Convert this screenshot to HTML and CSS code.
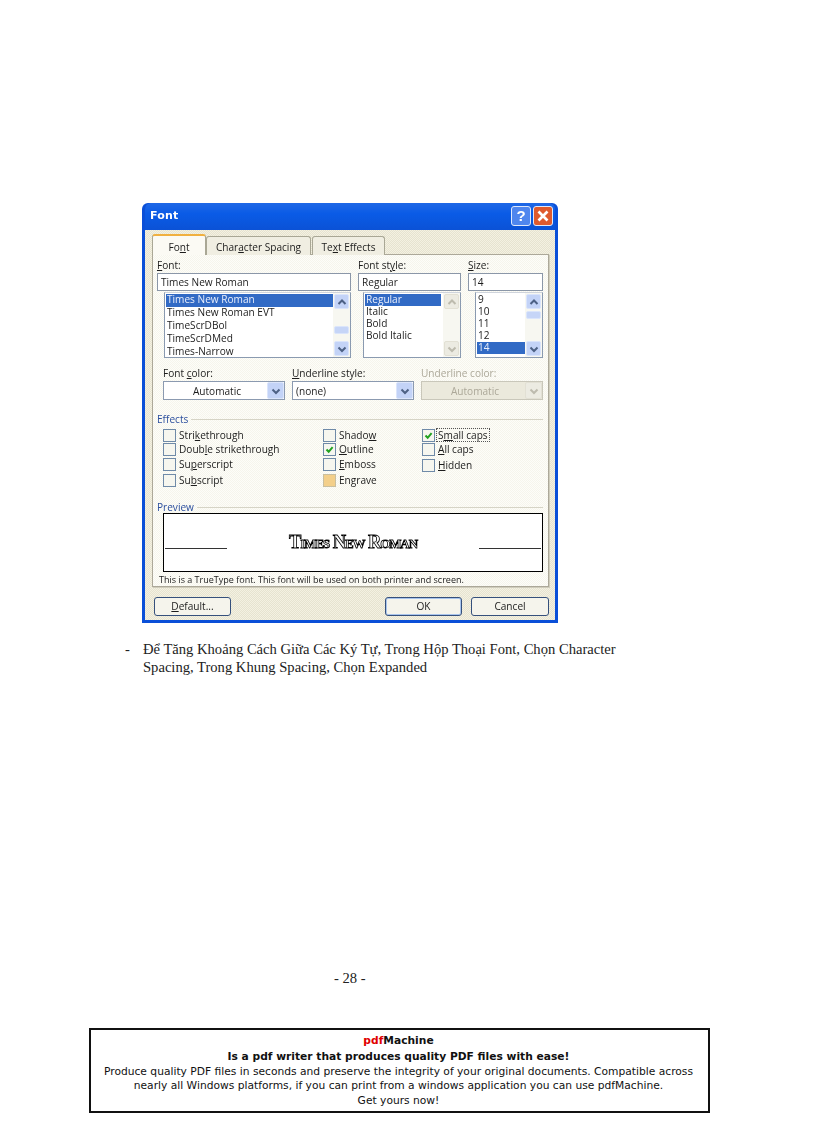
FILE: index.html
```html
<!DOCTYPE html>
<html lang="vi">
<head>
<meta charset="utf-8">
<title>Font</title>
<link rel="stylesheet" href="styles.css">
</head>
<body>
<main class="page">
  <section class="dialog">
    <header class="titlebar">
      <span class="title">Font</span>
      <span class="winbtn help">?</span>
      <span class="winbtn close"><svg viewBox="0 0 20 20" width="20" height="20"><path d="M5 5L15 15M15 5L5 15" stroke="#fff" stroke-width="3" fill="none"/></svg></span>
    </header>
    <div class="client">
      <nav class="tabs">
        <span class="tab active">Fo<u>n</u>t</span>
        <span class="tab t2">Char<u>a</u>cter Spacing</span>
        <span class="tab t3">Te<u>x</u>t Effects</span>
      </nav>
      <div class="panel">
        <div class="fontgrid">
          <div class="col">
            <label class="lbl"><u>F</u>ont:</label>
            <div class="input">Times New Roman</div>
            <div class="list l1">
              <div class="rows r13">
                <div class="sel">Times New Roman</div>
                <div>Times New Roman EVT</div>
                <div>TimeScrDBol</div>
                <div>TimeScrDMed</div>
                <div>Times-Narrow</div>
              </div>
              <div class="sbar">
                <span class="sb"><svg viewBox="0 0 12 12" width="12" height="12"><path d="M2.5 8L6 4.5L9.5 8" class="chev"/></svg></span>
                <span class="thumb th1"></span>
                <span class="sb"><svg viewBox="0 0 12 12" width="12" height="12"><path d="M2.5 4.5L6 8L9.5 4.5" class="chev"/></svg></span>
              </div>
            </div>
          </div>
          <div class="col">
            <label class="lbl">Font st<u>y</u>le:</label>
            <div class="input">Regular</div>
            <div class="list l2">
              <div class="rows r12">
                <div class="sel">Regular</div>
                <div>Italic</div>
                <div>Bold</div>
                <div>Bold Italic</div>
              </div>
              <div class="sbar off">
                <span class="sb"><svg viewBox="0 0 12 12" width="12" height="12"><path d="M2.5 8L6 4.5L9.5 8" class="chev"/></svg></span>
                <span class="sb"><svg viewBox="0 0 12 12" width="12" height="12"><path d="M2.5 4.5L6 8L9.5 4.5" class="chev"/></svg></span>
              </div>
            </div>
          </div>
          <div class="col">
            <label class="lbl"><u>S</u>ize:</label>
            <div class="input">14</div>
            <div class="list l3">
              <div class="rows r12">
                <div>9</div>
                <div>10</div>
                <div>11</div>
                <div>12</div>
                <div class="sel">14</div>
              </div>
              <div class="sbar">
                <span class="sb"><svg viewBox="0 0 12 12" width="12" height="12"><path d="M2.5 8L6 4.5L9.5 8" class="chev"/></svg></span>
                <span class="thumb th3"></span>
                <span class="sb"><svg viewBox="0 0 12 12" width="12" height="12"><path d="M2.5 4.5L6 8L9.5 4.5" class="chev"/></svg></span>
              </div>
            </div>
          </div>
        </div>
        <div class="selects">
          <div class="selcol">
            <label class="lbl">Font <u>c</u>olor:</label>
            <div class="select center"><span class="val">Automatic</span><span class="drop"><svg viewBox="0 0 12 12" width="12" height="12"><path d="M2.5 4.5L6 8L9.5 4.5" class="chev"/></svg></span></div>
          </div>
          <div class="selcol">
            <label class="lbl"><u>U</u>nderline style:</label>
            <div class="select"><span class="val">(none)</span><span class="drop"><svg viewBox="0 0 12 12" width="12" height="12"><path d="M2.5 4.5L6 8L9.5 4.5" class="chev"/></svg></span></div>
          </div>
          <div class="selcol disabled">
            <label class="lbl">Underline color:</label>
            <div class="select center"><span class="val">Automatic</span><span class="drop"><svg viewBox="0 0 12 12" width="12" height="12"><path d="M2.5 4.5L6 8L9.5 4.5" class="chev"/></svg></span></div>
          </div>
        </div>
        <div class="grouphead effects-head"><span class="blue">Effects</span><i></i></div>
        <div class="effects">
          <div class="fxcol c1">
            <div class="chk r1"><span class="box"></span><span>Stri<u>k</u>ethrough</span></div>
            <div class="chk r2"><span class="box"></span><span>Doub<u>l</u>e strikethrough</span></div>
            <div class="chk r3"><span class="box"></span><span>Su<u>p</u>erscript</span></div>
            <div class="chk r4"><span class="box"></span><span>Su<u>b</u>script</span></div>
          </div>
          <div class="fxcol c2">
            <div class="chk r1"><span class="box"></span><span>Shado<u>w</u></span></div>
            <div class="chk r2"><span class="box"><svg viewBox="0 0 11 11" width="11" height="11"><path d="M2.5 5.5L4.7 7.8L8.6 3.2" class="tick"/></svg></span><span><u>O</u>utline</span></div>
            <div class="chk r3"><span class="box"></span><span><u>E</u>mboss</span></div>
            <div class="chk r4"><span class="box warm"></span><span>En<u>g</u>rave</span></div>
          </div>
          <div class="fxcol c3">
            <div class="chk r1"><span class="box"><svg viewBox="0 0 11 11" width="11" height="11"><path d="M2.5 5.5L4.7 7.8L8.6 3.2" class="tick"/></svg></span><span class="focus">S<u>m</u>all caps</span></div>
            <div class="chk r2"><span class="box"></span><span><u>A</u>ll caps</span></div>
            <div class="chk r5"><span class="box"></span><span><u>H</u>idden</span></div>
          </div>
        </div>
        <div class="grouphead preview-head"><span class="blue">Preview</span><i></i></div>
        <div class="preview">
          <i class="rule"></i>
          <span class="sample">Times New Roman</span>
          <i class="rule"></i>
        </div>
        <p class="note">This is a TrueType font. This font will be used on both printer and screen.</p>
      </div>
      <footer class="buttons">
        <span class="btn w77"><u>D</u>efault...</span>
        <span class="spacer"></span>
        <span class="btn w77 primary">OK</span>
        <span class="btn w78">Cancel</span>
      </footer>
    </div>
  </section>

  <div class="para">
    <span class="dash">-</span>
    <p>Để Tăng Khoảng Cách Giữa Các Ký Tự, Trong Hộp Thoại Font, Chọn Character Spacing, Trong Khung Spacing, Chọn Expanded</p>
  </div>

  <div class="pageno">- 28 -</div>

  <aside class="ad">
    <div class="l-brand"><b><span class="red">pdf</span>Machine</b></div>
    <div class="l-head"><b>Is a pdf writer that produces quality PDF files with ease!</b></div>
    <div class="l-a">Produce quality PDF files in seconds and preserve the integrity of your original documents. Compatible across</div>
    <div class="l-b">nearly all Windows platforms, if you can print from a windows application you can use pdfMachine.</div>
    <div class="l-c">Get yours now!</div>
  </aside>
</main>
</body>
</html>
```

FILE: styles.css
```css
* { box-sizing: border-box; }
html, body { margin: 0; padding: 0; background: #fff; }
.page { width: 816px; height: 1123px; padding-top: 203px; overflow: hidden; }

.dialog {
  width: 416px; height: 420px; margin-left: 142px;
  background: #0a4fd8; border-radius: 6px 6px 0 0;
  padding: 0 3px 3px;
  font: 10.1px/12px "Open Sans", "Noto Sans", sans-serif;
  color: #1c1c1c;
  filter: blur(0.5px);
  display: flex; flex-direction: column;
}
.dialog u { text-decoration-thickness: 1px; text-underline-offset: 1px; }
.titlebar {
  height: 27px; flex: none; display: flex; align-items: center; gap: 2px; padding: 0 2px 2px 5px;
  background: linear-gradient(#1f68e6, #0a5be6 40%, #0b52d6);
  border-radius: 6px 6px 0 0;
}
.title { flex: 1; color: #fff; font: bold 11px/14px "DejaVu Sans", sans-serif; letter-spacing: .2px; }
.winbtn { width: 20px; height: 20px; border: 1px solid #dfe8fb; border-radius: 3px; display: flex; align-items: center; justify-content: center; }
.help { background: #4f86ee; color: #fff; font: bold 15px/18px "Liberation Sans", sans-serif; }
.close { background: #df5a2e; }

.client {
  flex: 1; min-height: 0; padding: 4px 6px 0 7px;
  background-color: #ece9d8;
  background-image: conic-gradient(#f4f1e2 25%, #e6e3d0 0 50%, #f4f1e2 0 75%, #e6e3d0 0);
  background-size: 2px 2px;
}
.tabs { display: flex; height: 21px; margin-bottom: -1px; align-items: flex-end; position: relative; }
.tab { height: 19px; border: 1px solid #a9a795; border-bottom: 0; border-radius: 3px 3px 0 0; background: #f0eee2; line-height: 16px; text-align: center; padding-top: 2px; }
.tab.active { width: 54px; height: 21px; background: #fbfaf4; border-top: 2px solid #f0b040; border-bottom: 0; position: relative; z-index: 1; padding-top: 3px; }
.t2 { width: 105px; }
.t3 { width: 73px; margin-left: 1px; }

.panel {
  width: 397px; height: 333px;
  border: 1px solid #aca899;
  padding: 4px 5px 0 4px;
  background-color: #fafaf4;
  background-image: conic-gradient(#fdfdf9 25%, #f6f5ec 0 50%, #fdfdf9 0 75%, #f6f5ec 0);
  background-size: 2px 2px;
  box-shadow: 1px 1px 0 #d0cdbc;
}
.fontgrid { display: grid; grid-template-columns: 194px 103px 75px; column-gap: 7px; }
.lbl { display: block; height: 14px; line-height: 12px; }
.input { height: 18px; border: 1px solid #8b97a8; background: #fff; line-height: 16px; padding-left: 3px; }
.list { height: 66px; margin-top: 1px; border: 1px solid #8a9ab0; border-top-color: #cfd4dc; background: #fff; display: flex; }
.l1 { margin-left: 7px; }
.l2 { margin-left: 5px; }
.l3 { margin-left: 7px; }
.rows { flex: 1; padding: 1px 0 0 1px; min-width: 0; }
.rows div { padding-left: 1px; }
.r13 div { height: 13px; line-height: 11px; }
.r12 div { height: 12px; line-height: 11px; }
.l2 .rows { padding: 1px 1px 0 1px; }
.l2 .sel { margin-right: 1px; }
.sel { background: #316ac5; color: #e9eefb; }
.sbar { width: 17px; flex: none; display: flex; flex-direction: column; justify-content: space-between; background: #f7f7f1; padding: 1px; position: relative; }
.sb { height: 15px; display: flex; align-items: center; justify-content: center; background: #c3d3f7; border: 1px solid #dbe5fb; border-radius: 2px; }
.chev { fill: none; stroke: #4d6185; stroke-width: 2; }
.thumb { position: absolute; left: 1px; width: 15px; height: 8px; background: #c6d5f7; border: 1px solid #dbe5fb; border-radius: 2px; }
.th1 { top: 33px; }
.th3 { top: 18px; }
.off .sb { background: #ecebe2; border-color: #e2e0d4; }
.off .chev { stroke: #bdbbae; }

.selects { display: grid; grid-template-columns: 122px 122px 122px; column-gap: 7px; margin: 9px 0 0 6px; }
.selcol .lbl { height: 14px; }
.select { height: 19px; display: flex; border: 1px solid #8b9ab0; background: #fff; align-items: center; }
.val { flex: 1; padding-left: 3px; }
.center .val { text-align: center; }
.drop { width: 17px; height: 17px; display: flex; align-items: center; justify-content: center; background: #c3d3f7; border: 1px solid #dbe5fb; border-radius: 2px; }
.disabled .lbl, .disabled .val { color: #aca899; }
.disabled .select { background: #ebe9dc; border-color: #c9c7ba; }
.disabled .drop { background: #ecebe2; border-color: #e2e0d4; }
.disabled .chev { stroke: #bdbbae; }

.grouphead { display: flex; align-items: center; gap: 3px; height: 12px; }
.blue { color: #2c4f9e; }
.grouphead i { flex: 1; height: 1px; background: #d6d4c6; }
.effects-head { margin-top: 13px; }
.effects { display: flex; margin: 3px 0 0 6px; height: 62px; }
.fxcol { display: flex; flex-direction: column; }
.c1 { width: 160px; }
.c2 { width: 99px; }
.chk { display: flex; align-items: center; gap: 3px; height: 14px; }
.r3, .r4 { height: 16px; }
.r5 { height: 14px; margin-top: 2px; }
.box { width: 13px; height: 13px; flex: none; border: 1px solid #6f8aa8; background: #f6f6ef; display: flex; align-items: center; justify-content: center; }
.warm { background: #f3cf8a; border-color: #c9bfa0; }
.tick { fill: none; stroke: #21a121; stroke-width: 2; }
.focus { outline: 1px dotted #555; padding: 0 1px; margin-left: -1px; }

.preview-head { margin-top: 11px; }
.preview { height: 59px; margin: 0 0 0 6px; width: 380px; border: 1px solid #000; background: #fff; display: flex; align-items: center; justify-content: space-between; padding: 0 1px; }
.rule { width: 62px; height: 1px; background: #333; margin-top: 12px; }
.sample {
  font: 700 18.5px/20px "Liberation Serif", serif; font-variant: small-caps; letter-spacing: -1.1px;
  color: #fff; -webkit-text-stroke: .8px #000; margin-top: -1px;
}
.note { margin: 2px 0 0 2px; font-size: 9px; line-height: 12px; color: #222; }

.buttons { display: flex; gap: 9px; margin-top: 10px; padding-left: 2px; }
.spacer { flex: 1; margin: 0 -9px; }
.btn { height: 19px; border: 1px solid #35507c; border-radius: 3px; background: #f5f4ec; text-align: center; line-height: 17px; }
.w77 { width: 77px; }
.w78 { width: 78px; }
.primary { box-shadow: inset 0 0 0 1px #a8c4ec; }

.para { display: flex; margin: 18px 0 0 125px; width: 498px; font: 14.6px/17.5px "Liberation Serif", serif; color: #222; }
.dash { width: 18px; flex: none; }
.para p { margin: 0; }

.pageno { margin-top: 294px; padding-left: 334px; font: 14.6px/17px "Liberation Serif", serif; color: #222; }

.ad {
  width: 621px; height: 85px; margin: 41px 0 0 89px;
  border: 2px solid #111; padding: 3px 2px 0 0;
  font: 10.7px/15px "DejaVu Sans", sans-serif; color: #111; text-align: center;
}
.l-head { margin-top: 1px; }
.l-b { line-height: 14px; }
.red { color: #e00000; }
```
